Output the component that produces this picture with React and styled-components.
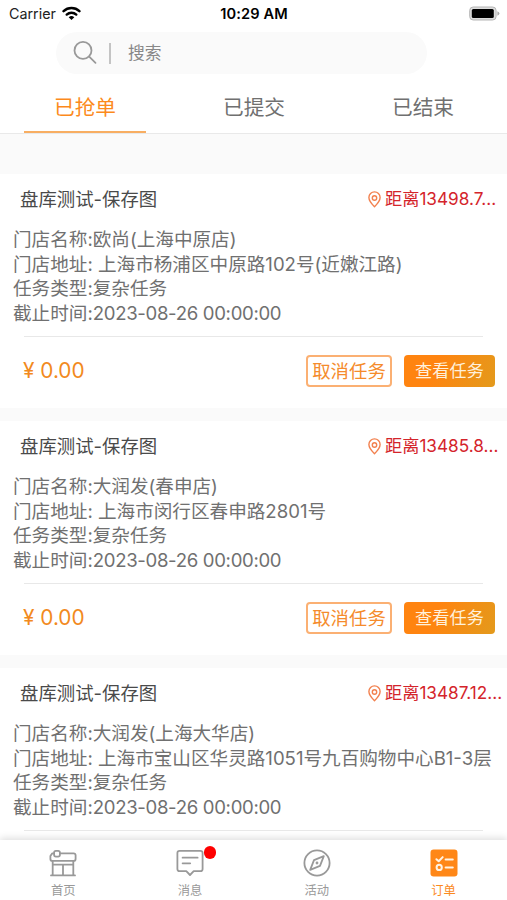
import React from "react"
import styled, { createGlobalStyle } from "styled-components"

// -----------------------------------------------------------------------------
// Data
// -----------------------------------------------------------------------------

const TABS = [`已抢单`, `已提交`, `已结束`]

const ORDERS = [
  {
    id: 1,
    title: `盘库测试-保存图`,
    distance: `距离13498.7...`,
    store: `欧尚(上海中原店)`,
    address: `上海市杨浦区中原路102号(近嫩江路)`,
    type: `复杂任务`,
    deadline: `2023-08-26 00:00:00`,
    price: `0.00`,
  },
  {
    id: 2,
    title: `盘库测试-保存图`,
    distance: `距离13485.8...`,
    store: `大润发(春申店)`,
    address: `上海市闵行区春申路2801号`,
    type: `复杂任务`,
    deadline: `2023-08-26 00:00:00`,
    price: `0.00`,
  },
  {
    id: 3,
    title: `盘库测试-保存图`,
    distance: `距离13487.12...`,
    store: `大润发(上海大华店)`,
    address: `上海市宝山区华灵路1051号九百购物中心B1-3层`,
    type: `复杂任务`,
    deadline: `2023-08-26 00:00:00`,
    price: `0.00`,
  },
]

// -----------------------------------------------------------------------------
// Sub-components
// -----------------------------------------------------------------------------

const GlobalStyle = createGlobalStyle`
  * {
    box-sizing: border-box;
  }
  body {
    margin: 0;
    background-color: white;
    font-family: Inter, "Noto Sans CJK SC", sans-serif;
  }
  button {
    font-family: inherit;
    padding: 0;
  }
`

const Screen = styled.div`
  display: flex;
  flex-direction: column;
  width: 507px;
  height: 900px;
  overflow: hidden;
  background-color: white;
`

const StatusBar = styled.div`
  display: grid;
  grid-template-columns: 1fr auto 1fr;
  align-items: center;
  flex: none;
  height: 28px;
  padding: 0 7px 0 9px;
  font-size: 14.3px;
  line-height: 28px;
  color: #222;
`

const Carrier = styled.div`
  display: flex;
  align-items: center;
  gap: 6px;
`

const Clock = styled.div`
  padding-right: 1px;
  font-weight: 600;
  font-size: 14.6px;
  letter-spacing: 0.1px;
  color: black;
`

const Battery = styled.svg`
  justify-self: end;
  margin-bottom: 2px;
`

const SearchBox = styled.div`
  display: flex;
  align-items: center;
  flex: none;
  width: 371px;
  height: 42px;
  margin: 4px 0 0 56px;
  padding-left: 17px;
  border-radius: 21px;
  background-color: #fafafa;
`

const Separator = styled.div`
  width: 2px;
  height: 21px;
  margin: 0 17px 0 12px;
  background-color: #c4c4c4;
`

const Placeholder = styled.span`
  font-size: 16.8px;
  line-height: 24px;
  color: #888;
`

const Tabs = styled.div`
  display: flex;
  flex: none;
  height: 60px;
  border-bottom: 1px solid #e9e9e9;
`

const Tab = styled.div`
  flex: 1;
  height: 59px;
  margin: 0 23px 0 24px;
  border-bottom: 2px solid ${({ active }) => (active ? `#f8ae62` : `transparent`)};
  font-size: 20.7px;
  line-height: 68px;
  text-align: center;
  color: ${({ active }) => (active ? `#fc8a1c` : `#707070`)};
`

const OrderList = styled.div`
  display: flex;
  flex-direction: column;
  flex: 1;
  gap: 13px;
  min-height: 0;
  padding-top: 40px;
  overflow: hidden;
  background-color: #fafafa;
`

const Card = styled.div`
  flex: none;
  height: 234px;
  background-color: white;
`

const CardHeader = styled.div`
  display: flex;
  justify-content: space-between;
  align-items: center;
  height: 50px;
  padding-left: 20px;
`

const Title = styled.div`
  font-size: 18.4px;
  line-height: 26px;
  color: #4a4a4a;
`

const Distance = styled.div`
  display: flex;
  align-items: center;
  gap: 4px;
  width: 139px;
  font-size: 17.2px;
  line-height: 26px;
  white-space: nowrap;
  color: #d4242b;
`

const Details = styled.div`
  height: 111.5px;
  padding: 3.4px 0 0 13px;
  font-size: 18.6px;
  line-height: 24.4px;
  white-space: nowrap;
  color: #707070;
`

const Deadline = styled.span`
  letter-spacing: -0.33px;
`

const CardFooter = styled.div`
  display: flex;
  align-items: center;
  height: 68px;
  margin: 0 12px 0 23px;
`

const Divider = styled.div`
  height: 1.5px;
  margin: 0 24px;
  background-color: #e8e8e8;
`

const Price = styled.div`
  flex: 1;
  font-size: 20.8px;
  line-height: 30px;
  color: #f28a1d;
`

const Button = styled.button`
  width: ${({ primary }) => (primary ? `91px` : `86px`)};
  height: 32px;
  margin-left: ${({ primary }) => (primary ? `12px` : `0`)};
  border: ${({ primary }) => (primary ? `0` : `2px solid #fbb073`)};
  border-radius: 4px;
  background: ${({ primary }) =>
    primary ? `linear-gradient(115deg, #ff8410 35%, #e39a1c)` : `white`};
  font-size: ${({ primary }) => (primary ? `17.2px` : `18.4px`)};
  line-height: 28px;
  color: ${({ primary }) => (primary ? `#fff1dc` : `#f58b2c`)};
`

const TabBar = styled.div`
  display: flex;
  flex: none;
  position: relative;
  height: 60px;
  background-color: white;
  box-shadow: 0 -2px 7px rgba(0, 0, 0, 0.13);
`

const TabBarItem = styled.div`
  display: flex;
  flex-direction: column;
  align-items: center;
  flex: 1;
  position: relative;
  padding-top: 9px;
  font-size: 12.3px;
  line-height: 28px;
  color: ${({ active }) => (active ? `#fb8a1e` : `#999`)};
`

const Badge = styled.div`
  position: absolute;
  top: 6px;
  left: 77px;
  width: 12.5px;
  height: 12.5px;
  border-radius: 50%;
  background-color: #fe0000;
`

const Icon = styled.svg`
  display: block;
  flex: none;
  fill: none;
  stroke-linecap: round;
  stroke-linejoin: round;
`

// -----------------------------------------------------------------------------
// Icons
// -----------------------------------------------------------------------------

const WifiIcon = () => (
  <Icon width="19" height="16" viewBox="0 0 19 16">
    <path d="M1.6 5.2a11.6 11.6 0 0 1 15.8 0" stroke="black" strokeWidth="2.5" />
    <path d="M4.7 8.6a7 7 0 0 1 9.6 0" stroke="black" strokeWidth="2.4" />
    <path d="M6.7 11.2a4.1 4.1 0 0 1 5.6 0l-2.8 2.8z" fill="black" />
  </Icon>
)

const BatteryIcon = () => (
  <Battery width="31" height="15" viewBox="0 0 31 15">
    <rect x=".7" y="1" width="26.4" height="13" rx="3.5" fill="#ddd" stroke="#b5b5b5" />
    <rect x="2.8" y="3" width="22" height="9" rx="1.5" fill="black" />
    <path d="M28.4 5.2q2 .8 2 2.3t-2 2.3z" fill="#aaa" />
  </Battery>
)

const SearchIcon = () => (
  <Icon width="24" height="24" viewBox="0 0 24 24" stroke="#999" strokeWidth="1.8">
    <circle cx="10" cy="9.4" r="8.5" />
    <path d="M16.2 15.6 22.5 21.8" />
  </Icon>
)

const PinIcon = () => (
  <Icon width="13" height="17" viewBox="0 0 13 17" stroke="#f2814f" strokeWidth="1.4">
    <path d="M6.5 15.7C3.6 12.9.9 9.7.9 6.5a5.6 5.6 0 0 1 11.2 0c0 3.2-2.7 6.4-5.6 9.2z" />
    <circle cx="6.5" cy="7" r="2.2" />
  </Icon>
)

const HomeIcon = () => (
  <Icon width="28" height="28" viewBox="0 0 28 28" stroke="#999" strokeWidth="1.8">
    <path d="M5 4.3H3.3L1.4 7.1v2.8q0 2 2 2h21.2q2 0 2-2V6.3q0-2-2-2H11.4" />
    <rect x="5.1" y="1.8" width="5.8" height="5.8" rx="1.8" />
    <path d="M3.7 12v14M24.3 12v14M2 26.4h24M4 15.7h20M14 15.7v10.6" />
  </Icon>
)

const MessageIcon = () => (
  <Icon width="28" height="28" viewBox="0 0 28 28" stroke="#999" strokeWidth="1.8">
    <path d="M3.6 1.8h20.8q2.2 0 2.2 2.2v16q0 2.2-2.2 2.2h-6.7L14 26l-3.7-3.8H3.6q-2.2 0-2.2-2.2V4q0-2.2 2.2-2.2z" />
    <path d="M6.6 8.7h15M6.6 14.3h7.6" />
  </Icon>
)

const CompassIcon = () => (
  <Icon width="28" height="28" viewBox="0 0 28 28" stroke="#999" strokeWidth="1.8">
    <circle cx="14" cy="14" r="12.6" />
    <path d="M20.8 7.2 17 16.8 7.2 20.8 11 11.2z" />
    <circle cx="14" cy="14" r=".8" strokeWidth="1.2" />
  </Icon>
)

const OrderIcon = () => (
  <Icon width="28" height="28" viewBox="0 0 28 28" stroke="#fff3e3" strokeWidth="2">
    <rect x=".5" y=".5" width="27" height="27" rx="3.2" fill="#ff8717" stroke="none" />
    <path d="m6.4 10.2 2.3 2.1 4-4.2M15.6 10.6h7.2M15.6 18.4h7.2" />
    <circle cx="9.2" cy="18.4" r="2.6" />
  </Icon>
)

// -----------------------------------------------------------------------------
// Component
// -----------------------------------------------------------------------------

const OrderCard = ({ order }) => {
  return (
    <Card>
      <CardHeader>
        <Title>{order.title}</Title>
        <Distance>
          <PinIcon />
          {order.distance}
        </Distance>
      </CardHeader>
      <Details>
        <div>门店名称:{order.store}</div>
        <div>门店地址: {order.address}</div>
        <div>任务类型:{order.type}</div>
        <div>
          截止时间:<Deadline>{order.deadline}</Deadline>
        </div>
      </Details>
      <Divider />
      <CardFooter>
        <Price>¥ {order.price}</Price>
        <Button>取消任务</Button>
        <Button primary="true">查看任务</Button>
      </CardFooter>
    </Card>
  )
}

const App = () => {
  return (
    <Screen>
      <GlobalStyle />
      <StatusBar>
        <Carrier>
          Carrier
          <WifiIcon />
        </Carrier>
        <Clock>10:29 AM</Clock>
        <BatteryIcon />
      </StatusBar>
      <SearchBox>
        <SearchIcon />
        <Separator />
        <Placeholder>搜索</Placeholder>
      </SearchBox>
      <Tabs>
        {TABS.map((tab, index) => (
          <Tab key={tab} active={index === 0 ? 1 : undefined}>
            {tab}
          </Tab>
        ))}
      </Tabs>
      <OrderList>
        {ORDERS.map((order) => (
          <OrderCard key={order.id} order={order} />
        ))}
      </OrderList>
      <TabBar>
        <TabBarItem>
          <HomeIcon />
          首页
        </TabBarItem>
        <TabBarItem>
          <MessageIcon />
          消息
          <Badge />
        </TabBarItem>
        <TabBarItem>
          <CompassIcon />
          活动
        </TabBarItem>
        <TabBarItem active="true">
          <OrderIcon />
          订单
        </TabBarItem>
      </TabBar>
    </Screen>
  )
}

export default App
